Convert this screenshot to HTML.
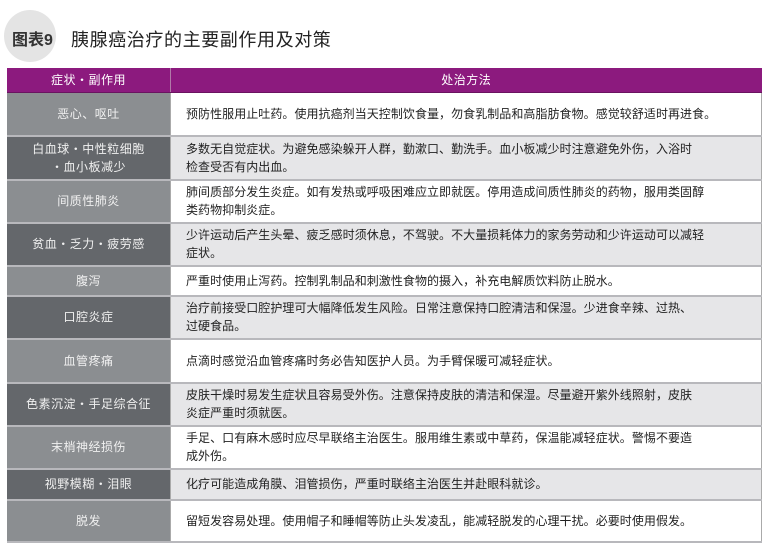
<!DOCTYPE html>
<html><head><meta charset="utf-8"><style>
body{margin:0;width:770px;height:548px;background:#fff;font-family:"Liberation Sans","Noto Sans CJK SC",sans-serif;position:relative;overflow:hidden}
.circ{position:absolute;left:4px;top:10px;width:52px;height:52px;border-radius:50%;background:#e4e4e4}
.t1{position:absolute;left:12px;top:26px;font-size:16px;font-weight:bold;color:#333}
.t2{position:absolute;left:71px;top:26px;font-size:18px;color:#222;letter-spacing:0.6px}
table{position:absolute;left:7px;top:68px;width:755px;border-collapse:collapse;font-size:12px;line-height:18px}
td,th{padding:0;border-bottom:2px solid #b8b8bc}
th{background:#8c1a7e;color:#fff;font-weight:normal;height:24px;border-bottom:1px solid #6a1360;letter-spacing:0.5px}
th:first-child{width:163px;border-right:1px solid #b07aa8}
td:first-child{text-align:center;color:#f0f0f0;border-right:1px solid #aaa;letter-spacing:0.5px}
td:last-child{padding-left:15px;padding-right:20px;color:#222;border-right:1px solid #aaa;letter-spacing:0.05px}
tr.a td:first-child{background:#8b8e91}
tr.b td:first-child{background:#64676b}
tr.a td:last-child{background:#fff}
tr.b td:last-child{background:#e6e6e8}
</style></head><body>
<div class="circ"></div><div class="t1">图表9</div>
<div class="t2">胰腺癌治疗的主要副作用及对策</div>
<table>
<tr><th>症状・副作用</th><th>处治方法</th></tr>
<tr class="a" style="height:43px"><td>恶心、呕吐</td><td>预防性服用止吐药。使用抗癌剂当天控制饮食量，勿食乳制品和高脂肪食物。感觉较舒适时再进食。</td></tr>
<tr class="b" style="height:44px"><td>白血球・中性粒细胞<br>・血小板减少</td><td>多数无自觉症状。为避免感染躲开人群，勤漱口、勤洗手。血小板减少时注意避免外伤，入浴时<br>检查受否有内出血。</td></tr>
<tr class="a" style="height:43px"><td>间质性肺炎</td><td>肺间质部分发生炎症。如有发热或呼吸困难应立即就医。停用造成间质性肺炎的药物，服用类固醇<br>类药物抑制炎症。</td></tr>
<tr class="b" style="height:43px"><td>贫血・乏力・疲劳感</td><td>少许运动后产生头晕、疲乏感时须休息，不驾驶。不大量损耗体力的家务劳动和少许运动可以减轻<br>症状。</td></tr>
<tr class="a" style="height:30px"><td>腹泻</td><td>严重时使用止泻药。控制乳制品和刺激性食物的摄入，补充电解质饮料防止脱水。</td></tr>
<tr class="b" style="height:43px"><td>口腔炎症</td><td>治疗前接受口腔护理可大幅降低发生风险。日常注意保持口腔清洁和保湿。少进食辛辣、过热、<br>过硬食品。</td></tr>
<tr class="a" style="height:44px"><td>血管疼痛</td><td>点滴时感觉沿血管疼痛时务必告知医护人员。为手臂保暖可减轻症状。</td></tr>
<tr class="b" style="height:43px"><td>色素沉淀・手足综合征</td><td>皮肤干燥时易发生症状且容易受外伤。注意保持皮肤的清洁和保湿。尽量避开紫外线照射，皮肤<br>炎症严重时须就医。</td></tr>
<tr class="a" style="height:43px"><td>末梢神经损伤</td><td>手足、口有麻木感时应尽早联络主治医生。服用维生素或中草药，保温能减轻症状。警惕不要造<br>成外伤。</td></tr>
<tr class="b" style="height:31px"><td>视野模糊・泪眼</td><td>化疗可能造成角膜、泪管损伤，严重时联络主治医生并赴眼科就诊。</td></tr>
<tr class="a" style="height:42px"><td>脱发</td><td>留短发容易处理。使用帽子和睡帽等防止头发凌乱，能减轻脱发的心理干扰。必要时使用假发。</td></tr>
</table>
</body></html>
